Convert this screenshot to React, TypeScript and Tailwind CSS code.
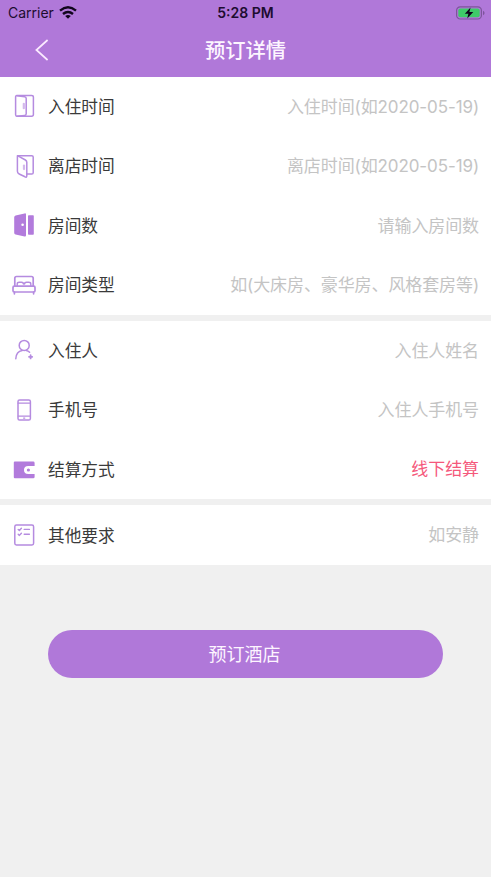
import type { ReactNode } from 'react';

interface Field {
  label: string;
  value: string;
  icon: ReactNode;
  active?: boolean;
}

function Icon({ children }: { children: ReactNode }) {
  return (
    <svg
      className="h-6 w-6 shrink-0"
      viewBox="0 0 24 24"
      fill="none"
      stroke="#b58be0"
      strokeWidth="1.5"
      strokeLinecap="round"
      strokeLinejoin="round"
    >
      {children}
    </svg>
  );
}

const checkInIcon = (
  <Icon>
    <path d="M4.8 1.6H19.6Q21.4 1.6 21.4 3.3V20.6Q21.4 22.3 19.6 22.3H5.4Q3.6 22.3 3.6 20.7V3Q3.6 1.6 4.8 1.6Z" />
    <path d="M5 1.7L12.6 2.8Q14.2 3 14.2 4.5V19.7Q14.2 21.2 12.6 21.4L5 22.3" />
    <path d="M11.8 9.8V14.2" strokeWidth="2.2" strokeOpacity="0.6" />
  </Icon>
);

const checkOutIcon = (
  <Icon>
    <path d="M5.5 1.7H19.8Q21.2 1.7 21.2 3.1V18.7Q21.2 20.1 19.8 20.1H15" />
    <path d="M5.5 1.7L13.4 6Q14.8 6.8 14.8 8.3V21.8Q14.8 23.8 13 22.8L7.2 20Q5.4 19.1 5.4 17.3V2.6Q5.4 1.7 5.5 1.7Z" />
    <path d="M12 11.5V15.1" strokeWidth="2.2" strokeOpacity="0.6" />
  </Icon>
);

const roomCountIcon = (
  <Icon>
    <path
      d="M3.6 2.6L12.6 .4Q14 .1 14 1.5V22.2Q14 23.8 12.6 23.5L3.6 21.6Q2.2 21.2 2.2 19.8V4.3Q2.2 3 3.6 2.6ZM10.6 10.5a1.3 1.3 0 1 0 0 2.6a1.3 1.3 0 0 0 0-2.6Z"
      fill="#b27bdc"
      fillRule="evenodd"
      stroke="none"
    />
    <rect x="16" y="2.2" width="5.8" height="19.6" rx="0.8" fill="#b27bdc" stroke="none" />
  </Icon>
);

const roomTypeIcon = (
  <Icon>
    <g strokeWidth="1.7">
      <path d="M2.8 12.4V5.2Q2.8 3.5 4.5 3.5H19.5Q21.2 3.5 21.2 5.2V12.4" />
      <rect x="1" y="13.2" width="22" height="5.8" rx="1.2" />
      <path d="M2.4 19.2V20.8M21.6 19.2V20.8" />
      <path
        d="M5.2 12.6V11Q5.2 9.3 7.2 9.3H9.4Q11.4 9.3 11.4 11M12.6 11Q12.6 9.3 14.6 9.3H16.8Q18.8 9.3 18.8 11V12.6"
        strokeWidth="1.4"
      />
    </g>
  </Icon>
);

const guestIcon = (
  <Icon>
    <circle cx="12.2" cy="7.4" r="5" />
    <path d="M3.8 20.8Q4.2 13.5 10.2 12.6M14.2 12.5Q16.2 12.8 17.6 14.2" />
    <path d="M18.6 17.2V20.4M17 18.8H20.2" strokeWidth="1.8" />
  </Icon>
);

const phoneIcon = (
  <Icon>
    <rect x="6" y="1.9" width="12.4" height="20.2" rx="1.6" />
    <path d="M6.2 5.2H18.2M6.2 18.1H18.2" strokeWidth="1.3" />
    <path d="M11.6 20.1H12.8" strokeWidth="1.2" />
  </Icon>
);

const walletIcon = (
  <Icon>
    <path
      d="M2.8 3.6H21.2Q22.6 3.6 22.6 5V8H16.2Q12 8.2 12 12Q12 15.8 16.2 16H22.6V18.9Q22.6 20.3 21.2 20.3H2.8Q1.8 20.3 1.8 19.3V4.6Q1.8 3.6 2.8 3.6Z"
      fill="#b27bdc"
      stroke="none"
    />
    <circle cx="16.4" cy="12" r="1.6" fill="#b27bdc" stroke="none" />
  </Icon>
);

const requestIcon = (
  <Icon>
    <rect x="2.8" y="2.1" width="18.8" height="19.8" rx="1.6" />
    <path d="M6.2 6.4L7.4 7.5L9.4 5.3M6.2 11.3L7.4 12.4L9.4 10.2M12.2 6.4H17.4M12.2 11.3H17.4" strokeWidth="1.4" />
  </Icon>
);

const groups: Field[][] = [
  [
    { label: '入住时间', value: '入住时间(如2020-05-19)', icon: checkInIcon },
    { label: '离店时间', value: '离店时间(如2020-05-19)', icon: checkOutIcon },
    { label: '房间数', value: '请输入房间数', icon: roomCountIcon },
    { label: '房间类型', value: '如(大床房、豪华房、风格套房等)', icon: roomTypeIcon },
  ],
  [
    { label: '入住人', value: '入住人姓名', icon: guestIcon },
    { label: '手机号', value: '入住人手机号', icon: phoneIcon },
    { label: '结算方式', value: '线下结算', icon: walletIcon, active: true },
  ],
  [{ label: '其他要求', value: '如安静', icon: requestIcon }],
];

function StatusBar() {
  return (
    <div className="grid h-[25px] grid-cols-3 items-center pl-2 pr-[6px] text-[#1d0c30]">
      <div className="flex items-center gap-[5px]">
        <span className="text-[14px]">Carrier</span>
        <svg className="h-[13px] w-[18px]" viewBox="0 0 18 13" fill="none" stroke="#10051c" strokeWidth="2.4">
          <path d="M1 4.7Q9-2.1 17 4.7" />
          <path d="M4 8Q9 3.8 14 8" />
          <path d="M9 12.8L6.2 10Q9 7.8 11.8 10Z" fill="#10051c" stroke="none" />
        </svg>
      </div>
      <span className="pr-[2px] text-center text-[14px] font-semibold">5:28 PM</span>
      <svg className="h-[14px] w-[29px] justify-self-end" viewBox="0 0 29 14">
        <rect x="0.6" y="0.8" width="24.8" height="12.2" rx="3.6" fill="none" stroke="#7d549b" strokeWidth="1.2" />
        <rect x="2.3" y="2.5" width="21.4" height="8.8" rx="2" fill="#3ecb68" />
        <path d="M27 4.8Q28.6 5.5 28.6 7Q28.6 8.5 27 9.2Z" fill="#7d549b" />
        <path d="M14.6 1.5L8.8 7.7H12.4L11.2 12.5L17.3 6.1H13.4Z" fill="#10051c" />
      </svg>
    </div>
  );
}

export default function App() {
  return (
    <div className="flex h-[877px] w-[491px] flex-col overflow-hidden bg-[#f0f0f0] font-['Inter','Noto_Sans_CJK_SC',sans-serif]">
      {/* Header */}
      <header className="h-[76.5px] shrink-0 bg-[#b078d9]">
        <StatusBar />
        <div className="grid h-[50px] grid-cols-3 items-center">
          <svg
            className="ml-[35px] h-[22px] w-[14px]"
            viewBox="0 0 14 22"
            fill="none"
            stroke="#fbeaff"
            strokeWidth="1.7"
          >
            <path d="M12.6 1L1.4 11L12.6 21" />
          </svg>
          <h1 className="pt-[2px] text-center text-[20.3px] font-medium text-[#fdf5ff]">预订详情</h1>
        </div>
      </header>

      {/* Form */}
      <main className="flex flex-col gap-[6px]">
        {groups.map((fields, i) => (
          <section key={i} className="bg-white">
            {fields.map((field) => (
              <div key={field.label} className="flex h-[59.55px] items-center px-3">
                {field.icon}
                <span className="ml-3 pt-[2px] text-[16.7px] text-[#3a3a3a]">{field.label}</span>
                <span
                  className={
                    field.active
                      ? 'ml-auto text-[16.95px] text-[#f5587b]'
                      : 'ml-auto pt-[2px] text-[17px] tracking-[-0.1px] text-[#c4c4c4]'
                  }
                >
                  {field.value}
                </span>
              </div>
            ))}
          </section>
        ))}
      </main>

      <button className="mx-12 mt-[65px] h-12 shrink-0 rounded-full bg-[#b078d9] pr-[2px] pt-[2px] text-[18px] text-[#fdf5ff]">
        预订酒店
      </button>
    </div>
  );
}
